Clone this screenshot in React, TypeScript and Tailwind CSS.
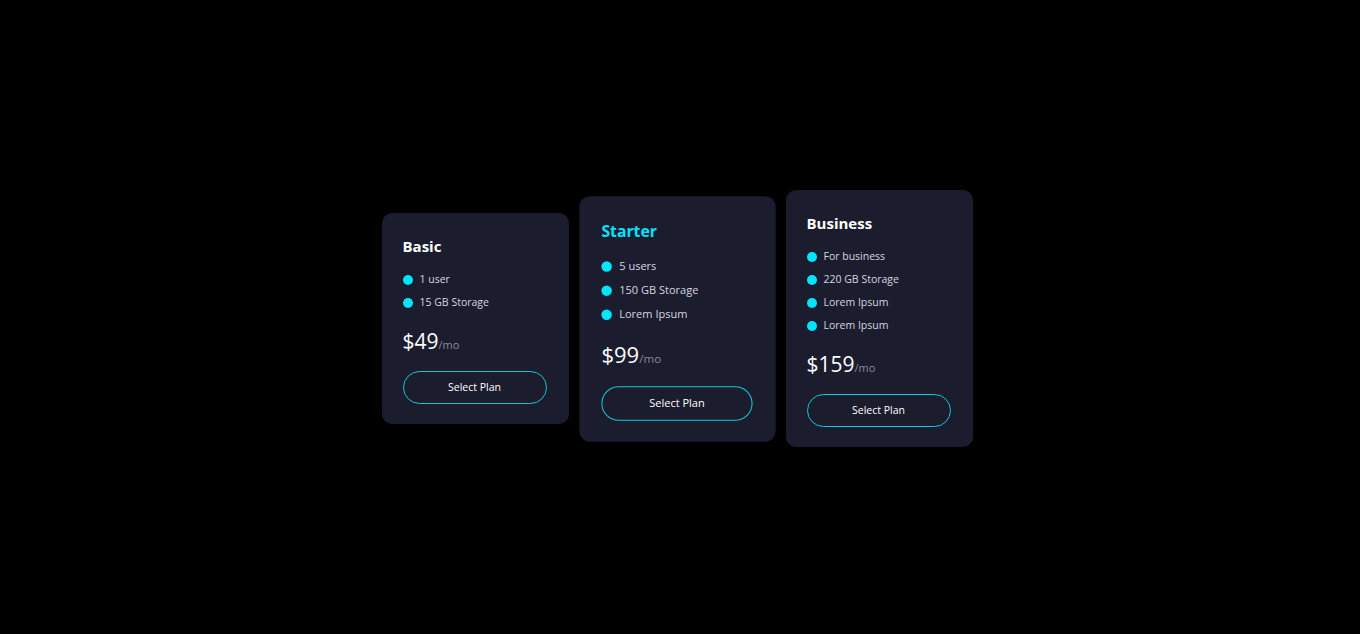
import React from 'react';

type Plan = {
  name: string;
  price: string;
  features: string[];
  featured?: boolean;
};

const PLANS: Plan[] = [
  { name: 'Basic', price: '$49', features: ['1 user', '15 GB Storage'] },
  { name: 'Starter', price: '$99', features: ['5 users', '150 GB Storage', 'Lorem Ipsum'], featured: true },
  { name: 'Business', price: '$159', features: ['For business', '220 GB Storage', 'Lorem Ipsum', 'Lorem Ipsum'] },
];

function PlanCard({ plan }: { plan: Plan }) {
  return (
    <div
      className={`w-[187px] rounded-[10px] bg-[#1b1c2e] pl-[21px] pr-[22px] pt-[21px] pb-5 ${
        plan.featured ? 'scale-105' : ''
      }`}
    >
      <h2 className={`text-[15px] font-bold leading-6 ${plan.featured ? 'text-[#00e5ff]' : 'text-white'}`}>
        {plan.name}
      </h2>

      <ul className="mt-3 flex flex-col gap-[3px]">
        {plan.features.map((f, i) => (
          <li key={i} className="flex h-5 items-center gap-[7px] text-[10.5px] text-[#d6d6e0]">
            <span className="h-[10px] w-[10px] shrink-0 rounded-full bg-[#00e5ff]"></span>
            {f}
          </li>
        ))}
      </ul>

      <p className="mt-[13px] h-[30px] text-[21px] leading-[30px] text-white">
        {plan.price}
        <span className="text-[11px] leading-none text-[#8a8a99]">/mo</span>
      </p>

      <button className="mt-[15px] h-[33px] w-full rounded-full border border-[#16c6d8] text-[10.5px] text-white">
        Select Plan
      </button>
    </div>
  );
}

export default function App() {
  return (
    <main
      className="flex min-h-screen items-center justify-center gap-[15px] bg-black pr-[6px] pt-[3px]"
      style={{ fontFamily: '"Open Sans", "Noto Sans", sans-serif' }}
    >
      {PLANS.map((p) => (
        <PlanCard key={p.name} plan={p} />
      ))}
    </main>
  );
}
